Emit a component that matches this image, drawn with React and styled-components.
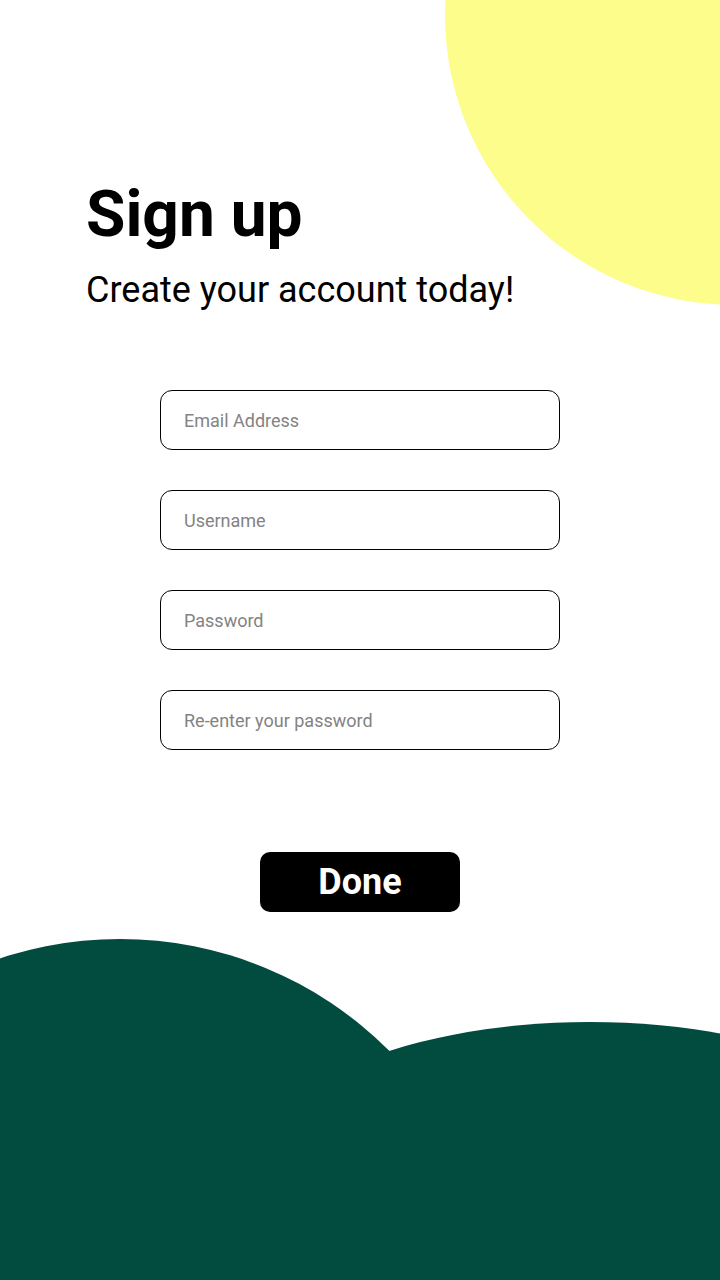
import React from 'react';
import styled, { createGlobalStyle } from 'styled-components';

const GlobalStyle = createGlobalStyle`
  html, body {
    margin: 0;
    padding: 0;
    background: #ffffff;
  }
  body {
    font-family: Roboto, "Liberation Sans", sans-serif;
  }
`;

// Page shell
const Page = styled.div`
  position: relative;
  width: 720px;
  height: 1280px;
  overflow: hidden;
  background: #ffffff;
  display: flex;
  flex-direction: column;
`;

const SunBlob = styled.div`
  position: absolute;
  left: 445px;
  top: -275px;
  width: 580px;
  height: 580px;
  border-radius: 50%;
  background: #fdfd8b;
`;

const Header = styled.header`
  position: relative;
  padding: 179px 0 0 86px;
`;

const Title = styled.h1`
  margin: 0;
  font-size: 64px;
  line-height: 72px;
  font-weight: 700;
  color: #000;
`;

const Subtitle = styled.p`
  margin: 18px 0 0;
  font-size: 36px;
  line-height: 42px;
  font-weight: 400;
  color: #000;
`;

const Form = styled.form`
  display: flex;
  flex-direction: column;
  align-items: center;
  gap: 40px;
  margin-top: 79px;
`;

const Field = styled.input`
  box-sizing: border-box;
  width: 400px;
  height: 60px;
  padding: 0 23px;
  border: 1px solid #000;
  border-radius: 12px;
  background: #fff;
  font-family: Roboto, "Liberation Sans", sans-serif;
  font-size: 18px;
  color: #000;
  outline: none;

  &::placeholder {
    color: #838383;
  }
`;

const DoneButton = styled.button`
  width: 200px;
  height: 60px;
  margin-top: 62px;
  border: none;
  border-radius: 10px;
  background: #000;
  color: #fff;
  font-family: Roboto, "Liberation Sans", sans-serif;
  font-size: 36px;
  font-weight: 700;
  cursor: pointer;
`;

const Hills = styled.svg`
  display: block;
  margin-top: auto;
  flex-shrink: 0;
`;

const fields = [
  { type: 'email', placeholder: 'Email Address' },
  { type: 'text', placeholder: 'Username' },
  { type: 'password', placeholder: 'Password' },
  { type: 'password', placeholder: 'Re-enter your password' },
];

const App = () => (
  <>
    <GlobalStyle />
    <Page>
      <SunBlob />
      <Header>
        <Title>Sign up</Title>
        <Subtitle>Create your account today!</Subtitle>
      </Header>

      <Form onSubmit={e => e.preventDefault()}>
        {fields.map(f => (
          <Field key={f.placeholder} type={f.type} placeholder={f.placeholder} />
        ))}
        <DoneButton type="submit">Done</DoneButton>
      </Form>

      <Hills width="720" height="342" viewBox="0 0 720 342">
        <circle cx="120" cy="381" r="380" fill="#024c3f" />
        <ellipse cx="590" cy="254" rx="360" ry="170" fill="#024c3f" />
        <rect x="0" y="160" width="720" height="182" fill="#024c3f" />
      </Hills>
    </Page>
  </>
);

export default App;
